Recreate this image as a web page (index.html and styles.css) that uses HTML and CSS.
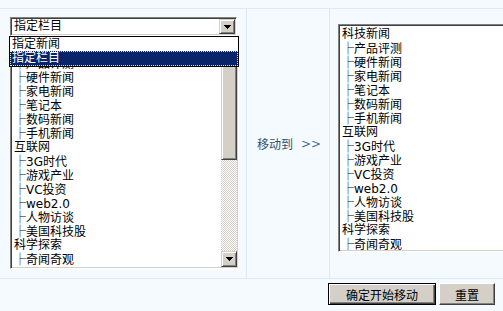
FILE: index.html
```html
<!DOCTYPE html>
<html lang="zh-CN">
<head>
    <meta charset="UTF-8">
    <title>移动栏目</title>
    <link rel="stylesheet" href="styles.css">
</head>
<body>
    <div class="topbar"></div>
    <div class="panel">
        <div class="pane-left">
            <div class="combo">
                <span class="combo-text">指定栏目</span>
                <span class="combo-btn">
                    <svg width="7" height="4" viewBox="0 0 7 4" shape-rendering="crispEdges"><path d="M0 0h7v1h-1v1h-1v1h-1v1h-1v-1h-1v-1h-1v-1h-1z" fill="#000"/></svg>
                </span>
            </div>
            <div class="dropdown">
                <div class="drop-opt">指定新闻</div>
                <div class="drop-opt selected">指定栏目</div>
            </div>
            <div class="listbox tall">
                <div class="items">
                    <div class="opt">科技新闻</div>
                    <div class="opt"><span class="tb">├</span>产品评测</div>
                    <div class="opt"><span class="tb">├</span>硬件新闻</div>
                    <div class="opt"><span class="tb">├</span>家电新闻</div>
                    <div class="opt"><span class="tb">├</span>笔记本</div>
                    <div class="opt"><span class="tb">├</span>数码新闻</div>
                    <div class="opt"><span class="tb">├</span>手机新闻</div>
                    <div class="opt">互联网</div>
                    <div class="opt"><span class="tb">├</span>3G时代</div>
                    <div class="opt"><span class="tb">├</span>游戏产业</div>
                    <div class="opt"><span class="tb">├</span>VC投资</div>
                    <div class="opt"><span class="tb">├</span>web2.0</div>
                    <div class="opt"><span class="tb">├</span>人物访谈</div>
                    <div class="opt"><span class="tb">├</span>美国科技股</div>
                    <div class="opt">科学探索</div>
                    <div class="opt"><span class="tb">├</span>奇闻奇观</div>
                </div>
                <div class="scrollbar">
                    <div class="sb-btn">
                        <svg width="7" height="4" viewBox="0 0 7 4" shape-rendering="crispEdges"><path d="M3 0h1v1h1v1h1v1h1v1h-7v-1h1v-1h1v-1h1z" fill="#000"/></svg>
                    </div>
                    <div class="sb-thumb"></div>
                    <div class="sb-track"></div>
                    <div class="sb-btn">
                        <svg width="7" height="4" viewBox="0 0 7 4" shape-rendering="crispEdges"><path d="M0 0h7v1h-1v1h-1v1h-1v1h-1v-1h-1v-1h-1v-1h-1z" fill="#000"/></svg>
                    </div>
                </div>
            </div>
        </div>
        <div class="pane-mid">
            <span class="move-label">移动到</span><span class="move-arrow">&gt;&gt;</span>
        </div>
        <div class="pane-right">
            <div class="listbox wide">
                <div class="items">
                    <div class="opt">科技新闻</div>
                    <div class="opt"><span class="tb">├</span>产品评测</div>
                    <div class="opt"><span class="tb">├</span>硬件新闻</div>
                    <div class="opt"><span class="tb">├</span>家电新闻</div>
                    <div class="opt"><span class="tb">├</span>笔记本</div>
                    <div class="opt"><span class="tb">├</span>数码新闻</div>
                    <div class="opt"><span class="tb">├</span>手机新闻</div>
                    <div class="opt">互联网</div>
                    <div class="opt"><span class="tb">├</span>3G时代</div>
                    <div class="opt"><span class="tb">├</span>游戏产业</div>
                    <div class="opt"><span class="tb">├</span>VC投资</div>
                    <div class="opt"><span class="tb">├</span>web2.0</div>
                    <div class="opt"><span class="tb">├</span>人物访谈</div>
                    <div class="opt"><span class="tb">├</span>美国科技股</div>
                    <div class="opt">科学探索</div>
                    <div class="opt"><span class="tb">├</span>奇闻奇观</div>
                </div>
            </div>
        </div>
    </div>
    <div class="actions">
        <button class="btn default">确定开始移动</button>
        <button class="btn">重置</button>
    </div>
</body>
</html>
```

FILE: styles.css
```css
body {
    margin: 0;
    background: #f5faff;
    font-family: "DejaVu Sans", "Noto Sans CJK SC", sans-serif;
    font-size: 12px;
    color: #000;
    overflow: hidden;
}
.topbar {
    height: 8px;
    border-bottom: 1px solid #dceaf7;
}
.panel {
    display: flex;
    height: 269px;
    border-bottom: 1px solid #dceaf7;
}
.pane-left {
    position: relative;
    flex: 0 0 236px;
    padding: 8px 0 0 10px;
    border-right: 1px solid #dceaf7;
}
.pane-mid {
    flex: 0 0 72px;
    padding-left: 10px;
    display: flex;
    align-items: center;
    white-space: nowrap;
    border-right: 1px solid #dceaf7;
}
.move-label {
    color: #2f4f72;
    margin-right: 8px;
}
.move-arrow {
    color: #46709c;
}
.pane-right {
    flex: 1;
    min-width: 0;
    overflow: hidden;
    padding: 15px 0 0 8px;
}

/* classic combo */
.combo {
    box-sizing: border-box;
    width: 227px;
    height: 19px;
    display: flex;
    align-items: center;
    background: #fff;
    border: 1px solid;
    border-color: #808080 #fff #fff #808080;
    box-shadow: inset 1px 1px #404040, inset -1px -1px #d4d0c8;
    padding: 1px;
    margin-bottom: 3px;
}
.combo-text {
    flex: 1;
    padding-left: 2px;
    line-height: 15px;
}
.combo-btn {
    box-sizing: border-box;
    width: 16px;
    height: 15px;
    display: flex;
    align-items: center;
    justify-content: center;
    background: #d4d0c8;
    border: 1px solid;
    border-color: #d4d0c8 #404040 #404040 #d4d0c8;
    box-shadow: inset 1px 1px #fff, inset -1px -1px #808080;
}
.dropdown {
    position: absolute;
    left: 9px;
    top: 27px;
    width: 228px;
    background: #fff;
    border: 1px solid #000;
    z-index: 2;
}
.drop-opt {
    height: 14px;
    line-height: 14px;
    padding-left: 2px;
}
.drop-opt.selected {
    height: 13px;
    line-height: 13px;
    padding-left: 1px;
    background: #0a246a;
    color: #fff;
    border: 1px dotted #f0e6a0;
}

/* classic listbox */
.listbox {
    box-sizing: border-box;
    display: flex;
    background: #fff;
    border: 1px solid;
    border-color: #808080 #fff #fff #808080;
    box-shadow: inset 1px 1px #404040, inset -1px -1px #d4d0c8;
    padding: 1px;
}
.listbox.tall {
    width: 229px;
    height: 230px;
}
.listbox.wide {
    width: 200px;
    height: 228px;
}
.items {
    flex: 1;
    overflow: hidden;
    padding: 1px 0 0 2px;
}
.opt {
    height: 14px;
    line-height: 14px;
    white-space: nowrap;
}
.tb {
    font-family: "Noto Sans CJK SC", sans-serif;
    font-weight: bold;
}
.scrollbar {
    width: 16px;
    display: flex;
    flex-direction: column;
}
.sb-btn,
.sb-thumb {
    box-sizing: border-box;
    background: #d4d0c8;
    border: 1px solid;
    border-color: #d4d0c8 #404040 #404040 #d4d0c8;
    box-shadow: inset 1px 1px #fff, inset -1px -1px #808080;
}
.sb-btn {
    height: 16px;
    display: flex;
    align-items: center;
    justify-content: center;
}
.sb-thumb {
    height: 103px;
}
.sb-track {
    flex: 1;
    background: repeating-conic-gradient(#d4d0c8 0 25%, #fff 0 50%) 0 0 / 2px 2px;
}

/* buttons */
.actions {
    display: flex;
    justify-content: flex-end;
    gap: 3px;
    padding: 4px 8px 0 0;
}
.btn {
    box-sizing: border-box;
    height: 22px;
    padding: 0;
    font-family: "Noto Sans CJK SC", sans-serif;
    font-size: 12px;
    color: #000;
    background: #d4d0c8;
    border: 1px solid;
    border-color: #fff #404040 #404040 #fff;
    box-shadow: inset -1px -1px #808080;
    width: 56px;
}
.btn.default {
    width: 108px;
    border-color: #000;
    box-shadow: inset 1px 1px #fff, inset -1px -1px #404040, inset -2px -2px #808080;
}
```
